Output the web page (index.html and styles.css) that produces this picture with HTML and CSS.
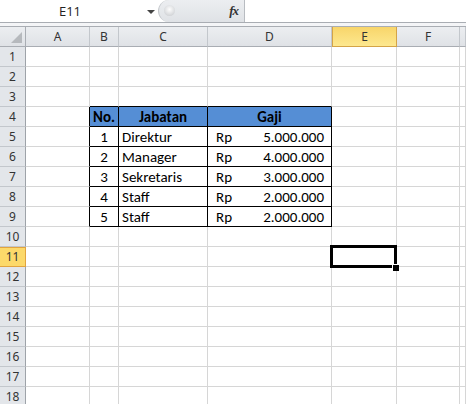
FILE: index.html
```html
<!DOCTYPE html>
<html>
<head>
<meta charset="utf-8">
<link rel="stylesheet" href="styles.css">
</head>
<body>
<div class="app">
  <div class="fbar">
    <div class="namebox"><span class="nbtext">E11</span><span class="arrow"></span></div>
    <div class="fxzone"><span class="knob"></span><span class="fx">fx</span></div>
    <div class="finput"></div>
  </div>
  <div class="strip"></div>
  <div class="sheet">
    <div class="row hdr"><div class="rh corner"><span class="tri"></span></div><div class="ch">A</div><div class="ch">B</div><div class="ch">C</div><div class="ch">D</div><div class="ch sel">E</div><div class="ch">F</div><div class="ch"></div></div>
    <div class="row"><div class="rh">1</div><div class="c"></div><div class="c"></div><div class="c"></div><div class="c"></div><div class="c"></div><div class="c"></div><div class="c"></div></div>
    <div class="row"><div class="rh">2</div><div class="c"></div><div class="c"></div><div class="c"></div><div class="c"></div><div class="c"></div><div class="c"></div><div class="c"></div></div>
    <div class="row above"><div class="rh">3</div><div class="c"></div><div class="c"></div><div class="c"></div><div class="c"></div><div class="c"></div><div class="c"></div><div class="c"></div></div>
    <div class="row tbl head"><div class="rh">4</div><div class="c"></div><div class="c ctr">No.</div><div class="c ctr">Jabatan</div><div class="c ctr">Gaji</div><div class="c"></div><div class="c"></div><div class="c"></div></div>
    <div class="row tbl"><div class="rh">5</div><div class="c"></div><div class="c ctr">1</div><div class="c txt">Direktur</div><div class="c acc"><span>Rp</span><span>5.000.000</span></div><div class="c"></div><div class="c"></div><div class="c"></div></div>
    <div class="row tbl"><div class="rh">6</div><div class="c"></div><div class="c ctr">2</div><div class="c txt">Manager</div><div class="c acc"><span>Rp</span><span>4.000.000</span></div><div class="c"></div><div class="c"></div><div class="c"></div></div>
    <div class="row tbl"><div class="rh">7</div><div class="c"></div><div class="c ctr">3</div><div class="c txt">Sekretaris</div><div class="c acc"><span>Rp</span><span>3.000.000</span></div><div class="c"></div><div class="c"></div><div class="c"></div></div>
    <div class="row tbl"><div class="rh">8</div><div class="c"></div><div class="c ctr">4</div><div class="c txt">Staff</div><div class="c acc"><span>Rp</span><span>2.000.000</span></div><div class="c"></div><div class="c"></div><div class="c"></div></div>
    <div class="row tbl"><div class="rh">9</div><div class="c"></div><div class="c ctr">5</div><div class="c txt">Staff</div><div class="c acc"><span>Rp</span><span>2.000.000</span></div><div class="c"></div><div class="c"></div><div class="c"></div></div>
    <div class="row"><div class="rh">10</div><div class="c"></div><div class="c"></div><div class="c"></div><div class="c"></div><div class="c"></div><div class="c"></div><div class="c"></div></div>
    <div class="row"><div class="rh selr">11</div><div class="c"></div><div class="c"></div><div class="c"></div><div class="c"></div><div class="c active"><span class="selbox"></span><span class="handle"></span></div><div class="c"></div><div class="c"></div></div>
    <div class="row"><div class="rh">12</div><div class="c"></div><div class="c"></div><div class="c"></div><div class="c"></div><div class="c"></div><div class="c"></div><div class="c"></div></div>
    <div class="row"><div class="rh">13</div><div class="c"></div><div class="c"></div><div class="c"></div><div class="c"></div><div class="c"></div><div class="c"></div><div class="c"></div></div>
    <div class="row"><div class="rh">14</div><div class="c"></div><div class="c"></div><div class="c"></div><div class="c"></div><div class="c"></div><div class="c"></div><div class="c"></div></div>
    <div class="row"><div class="rh">15</div><div class="c"></div><div class="c"></div><div class="c"></div><div class="c"></div><div class="c"></div><div class="c"></div><div class="c"></div></div>
    <div class="row"><div class="rh">16</div><div class="c"></div><div class="c"></div><div class="c"></div><div class="c"></div><div class="c"></div><div class="c"></div><div class="c"></div></div>
    <div class="row"><div class="rh">17</div><div class="c"></div><div class="c"></div><div class="c"></div><div class="c"></div><div class="c"></div><div class="c"></div><div class="c"></div></div>
    <div class="row"><div class="rh">18</div><div class="c"></div><div class="c"></div><div class="c"></div><div class="c"></div><div class="c"></div><div class="c"></div><div class="c"></div></div>
  </div>
</div>
</body>
</html>
```
FILE: styles.css
```css
* { box-sizing: border-box; }
html, body { margin: 0; padding: 0; background: #fff; }
body { width: 466px; height: 404px; overflow: hidden; font-family: "Noto Sans", "DejaVu Sans", sans-serif; }
.app { width: 466px; }

.fbar { display: flex; height: 23px; border-bottom: 1px solid #a9adb3; background: #fff; }
.namebox { width: 158px; position: relative; display: flex; align-items: center; justify-content: center; }
.nbtext { font-size: 13px; color: #222; margin-left: -18px; font-family: "Open Sans", "Noto Sans", sans-serif; }
.arrow { position: absolute; left: 147px; top: 10px; width: 0; height: 0; border-left: 4px solid transparent; border-right: 4px solid transparent; border-top: 4px solid #444; }
.fxzone { width: 86px; position: relative; background: linear-gradient(#eceef1, #dfe2e6); border-radius: 11px 0 0 11px; border-left: 1px solid #c5c8cc; display: flex; align-items: center; justify-content: flex-end; padding-right: 6px; }
.knob { position: absolute; left: 5px; top: 5px; width: 11px; height: 11px; border-radius: 50%; background: radial-gradient(circle at 50% 40%, #fdfdfd, #c4c7cb); }
.fx { font-family: "Liberation Serif", serif; font-style: italic; font-weight: bold; font-size: 13px; color: #333; letter-spacing: -1px; }
.finput { flex: 1; background: #fff; border-left: 1px solid #b8bcc1; }
.strip { height: 4px; background: #f4f5f7; border-bottom: 1px solid #a9adb3; }

.sheet { display: flex; flex-direction: column; }
.row { display: flex; height: 20px; }
.row > div { height: 20px; flex: none; border-right: 1px solid #d6d6d6; border-bottom: 1px solid #d6d6d6; }
.row > :nth-child(1) { width: 26px; }
.row > :nth-child(2) { width: 64px; }
.row > :nth-child(3) { width: 29px; }
.row > :nth-child(4) { width: 89px; }
.row > :nth-child(5) { width: 124px; }
.row > :nth-child(6) { width: 65px; }
.row > :nth-child(7) { width: 63px; }
.row > :nth-child(8) { flex: 1; }

.rh { background: #e3e6ea; border-right: 1px solid #9ea3a9 !important; border-bottom: 1px solid #c3c7cc !important; font-size: 12px; color: #333; text-align: center; line-height: 19px; }
.rh.selr { background: #fcd96a; border-color: #e1a43f !important; border-top: 1px solid #e1a43f; line-height: 17px; }
.hdr > div { background: linear-gradient(#eceef1, #dfe2e6); border-right: 1px solid #c3c7cc; border-bottom: 1px solid #a9adb3; font-size: 12px; color: #333; text-align: center; line-height: 19px; }
.hdr > .corner { position: relative; border-right: 1px solid #a9adb3 !important; border-bottom: 1px solid #a9adb3 !important; }
.tri { position: absolute; right: 3px; bottom: 3px; width: 0; height: 0; border-left: 11px solid transparent; border-bottom: 11px solid #b6b9bd; }
.hdr > .sel { background: linear-gradient(#f8d56a, #fde88f); border: 1px solid #d4a447; border-top: none; }

.c { font-family: "Carlito", "Lato", "Liberation Sans", sans-serif; font-size: 15px; color: #000; line-height: 20px; white-space: nowrap; overflow: visible; }
.above > :nth-child(3), .above > :nth-child(4), .above > :nth-child(5) { border-bottom-color: #000; }
.tbl > :nth-child(2) { border-right-color: #000; }
.tbl > :nth-child(3), .tbl > :nth-child(4), .tbl > :nth-child(5) { border-right-color: #000; border-bottom-color: #000; }
.head > :nth-child(3), .head > :nth-child(4), .head > :nth-child(5) { background: #558ed5; font-weight: bold; }
.ctr { text-align: center; }
.txt { padding-left: 3px; }
.acc { display: flex; justify-content: space-between; padding: 0 7px 0 8px; }

.active { position: relative; }
.selbox { position: absolute; left: -2px; top: -2px; width: 67px; height: 23px; border: 3px solid #000; }
.handle { position: absolute; left: 60px; top: 17px; width: 7px; height: 7px; background: #000; border-left: 1px solid #fff; border-top: 1px solid #fff; }
```
